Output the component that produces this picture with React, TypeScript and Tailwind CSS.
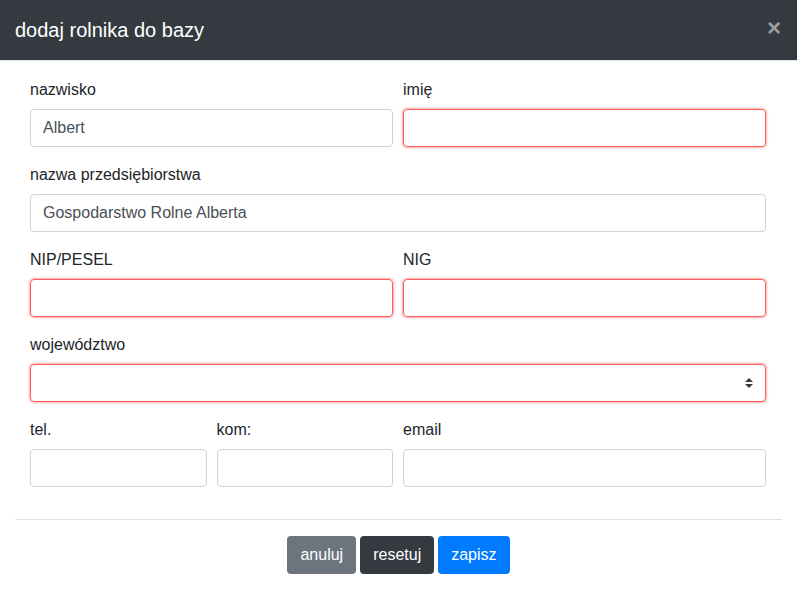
const font = { fontFamily: '"Liberation Sans", Arial, sans-serif' };

function Field({
  label,
  value,
  invalid,
  className = "",
}: {
  label: string;
  value?: string;
  invalid?: boolean;
  className?: string;
}) {
  return (
    <div className={`flex flex-col ${className}`}>
      <label className="text-base leading-6 text-[#212529] mb-[7px]">{label}</label>
      <input
        defaultValue={value}
        className={`h-[38px] w-full rounded-[4px] border px-3 text-base text-[#495057] outline-none ${
          invalid
            ? "border-[#ff5c5c] shadow-[0_0_2px_1px_rgba(255,80,80,0.45)]"
            : "border-[#ced4da]"
        }`}
      />
    </div>
  );
}

export default function App() {
  return (
    <div className="w-[797px] h-[590px] bg-white overflow-hidden" style={font}>
      {/* Header */}
      <div className="h-[61px] bg-[#343a40] border-b border-[#dee2e6] flex items-center justify-between pl-[15px] pr-[16px]">
        <h5 className="text-[20px] text-white leading-none">dodaj rolnika do bazy</h5>
        <span className="text-[#9a9ea3] text-[24px] font-bold leading-none -mt-[4px]">×</span>
      </div>

      {/* Body */}
      <div className="pl-[30px] pr-[31px] pt-[17px] pb-[32px] flex flex-col gap-[16px]">
        <div className="grid grid-cols-2 gap-[10px]">
          <Field label="nazwisko" value="Albert" />
          <Field label="imię" invalid />
        </div>
        <Field label="nazwa przedsiębiorstwa" value="Gospodarstwo Rolne Alberta" />
        <div className="grid grid-cols-2 gap-[10px]">
          <Field label="NIP/PESEL" invalid />
          <Field label="NIG" invalid />
        </div>
        <div className="flex flex-col">
          <label className="text-base leading-6 text-[#212529] mb-[7px]">województwo</label>
          <div className="h-[38px] rounded-[4px] border border-[#ff5c5c] shadow-[0_0_2px_1px_rgba(255,80,80,0.45)] flex items-center justify-end pr-[12px]">
            <svg width="8" height="10" viewBox="0 0 8 10">
              <path d="M4 0 L8 4 H0 Z M0 6 H8 L4 10 Z" fill="#343a40" />
            </svg>
          </div>
        </div>
        <div className="grid grid-cols-2 gap-[10px]">
          <div className="grid grid-cols-2 gap-[10px]">
            <Field label="tel." />
            <Field label="kom:" />
          </div>
          <Field label="email" />
        </div>
      </div>

      {/* Footer */}
      <div className="mx-[15px] border-t border-[#dee2e6] pt-[16px] flex justify-center gap-[4px]">
        <button className="h-[38px] px-[13px] rounded-[4px] bg-[#6c757d] text-white text-base">anuluj</button>
        <button className="h-[38px] px-[13px] rounded-[4px] bg-[#343a40] text-white text-base">resetuj</button>
        <button className="h-[38px] px-[13px] rounded-[4px] bg-[#007bff] text-white text-base">zapisz</button>
      </div>
    </div>
  );
}
